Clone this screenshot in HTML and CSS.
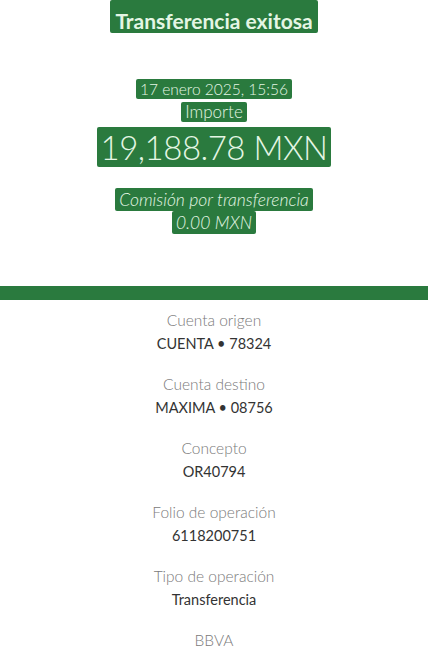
FILE: index.html
```html
<!DOCTYPE html>
<html lang="es">
<head>
    <meta charset="UTF-8">
    <meta name="viewport" content="width=device-width, initial-scale=1.0">
    <title>Transferencia exitosa</title>
    <link rel="stylesheet" href="styles.css">
</head>
<body>
    <header class="summary">
        <h1 class="title"><span>Transferencia exitosa</span></h1>
        <p class="date"><span>17 enero 2025, 15:56</span></p>
        <p class="label"><span>Importe</span></p>
        <p class="amount"><span>19,188.78 MXN</span></p>
        <p class="fee first"><span>Comisión por transferencia</span></p>
        <p class="fee"><span>0.00 MXN</span></p>
    </header>

    <div class="bar"></div>

    <ul class="details">
        <li><span class="key">Cuenta origen</span><span class="val">CUENTA • 78324</span></li>
        <li><span class="key">Cuenta destino</span><span class="val">MAXIMA • 08756</span></li>
        <li><span class="key">Concepto</span><span class="val">OR40794</span></li>
        <li><span class="key">Folio de operación</span><span class="val">6118200751</span></li>
        <li><span class="key">Tipo de operación</span><span class="val">Transferencia</span></li>
        <li><span class="key">BBVA</span></li>
    </ul>
</body>
</html>
```

FILE: styles.css
```css
body {
    margin: 0;
    background: #fff;
    font-family: Lato, 'Open Sans', Arial, sans-serif;
    color: #222;
}

.summary {
    text-align: center;
    padding-bottom: 52px;
}

.summary p,
.summary h1 {
    margin: 0;
}

.summary span {
    display: inline-block;
    background: #2a7a3e;
    color: #e4f6e4;
    border-radius: 2px;
}

.title {
    font-size: 21px;
    font-weight: 700;
    line-height: 22px;
}

.title span {
    padding: 10px 5px 1px;
}

.date {
    margin-top: 46px !important;
    font-size: 15.5px;
    font-weight: 300;
    line-height: 20px;
}

.date span {
    padding: 0 4px;
}

.label {
    margin-top: 3px !important;
    font-size: 17px;
    font-weight: 300;
    line-height: 20px;
}

.label span {
    padding: 0 4px;
}

.amount {
    margin-top: 5px !important;
    font-size: 33px;
    font-weight: 300;
    line-height: 40px;
    letter-spacing: -0.5px;
}

.amount span {
    padding: 0 4px;
}

.fee {
    font-size: 17.5px;
    font-style: italic;
    font-weight: 300;
    line-height: 23px;
}

.fee.first {
    margin-top: 21px;
}

.fee span {
    padding: 0 4px;
}

.bar {
    height: 14px;
    background: #2a7a3e;
}

.details {
    list-style: none;
    margin: 0;
    padding: 10px 0 0;
    text-align: center;
}

.details li {
    display: flex;
    flex-direction: column;
    align-items: center;
    gap: 4px;
    margin-bottom: 20px;
    line-height: 20px;
}

.key {
    font-size: 15.5px;
    color: #7a7a7a;
    font-weight: 300;
}

.val {
    font-size: 14.5px;
    color: #333;
}
```
